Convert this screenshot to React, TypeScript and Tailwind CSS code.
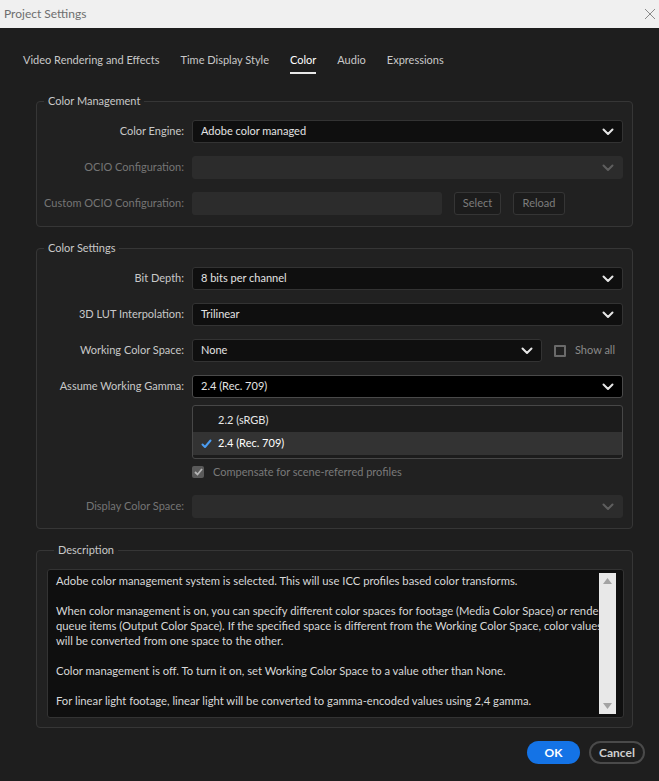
import React from "react";

function Chevron({ dim = false }: { dim?: boolean }) {
  return (
    <svg width="12" height="8" viewBox="0 0 12 8" className="shrink-0">
      <path
        d="M1.5 1.5 L6 6 L10.5 1.5"
        fill="none"
        stroke={dim ? "#5e5e5e" : "#e6e6e6"}
        strokeWidth="2"
        strokeLinecap="round"
        strokeLinejoin="round"
      />
    </svg>
  );
}

type SelectProps = {
  value?: string;
  disabled?: boolean;
  focused?: boolean;
  className?: string;
};

function Select({ value, disabled, focused, className = "" }: SelectProps) {
  const tone = disabled
    ? "border-[#2c2c2c] bg-[#2c2c2c]"
    : focused
      ? "border-[#4a4a4a] bg-black"
      : "border-[#333333] bg-[#0f0f0f]";
  return (
    <div
      className={`flex h-[23px] items-center justify-between rounded-[3px] border pl-[8px] pr-[8px] text-[11px] text-[#e3e3e3] ${tone} ${className}`}
    >
      <span>{value}</span>
      <Chevron dim={disabled} />
    </div>
  );
}

function Row({ label, disabled, children, className = "" }: { label: string; disabled?: boolean; children: React.ReactNode; className?: string }) {
  return (
    <div className={`grid grid-cols-[147px_1fr] items-center gap-x-[8px] ${className}`}>
      <span className={`whitespace-nowrap text-right text-[11px] ${disabled ? "text-[#757575]" : "text-[#c8c8c8]"}`}>{label}</span>
      {children}
    </div>
  );
}

function Group({ title, children, className = "" }: { title: string; children: React.ReactNode; className?: string }) {
  return (
    <fieldset className={`rounded-[4px] border border-[#363636] bg-[#212121] pr-[9px] pt-[11px] ${className}`}>
      <legend className="ml-[7px] px-[4px] text-[11px] leading-[16px] text-[#c8c8c8]">{title}</legend>
      {children}
    </fieldset>
  );
}

function SmallButton({ label }: { label: string }) {
  return (
    <div className="flex h-[23px] items-center justify-center rounded-[3px] border border-[#353535] bg-[#1c1c1c] px-[8px] text-[11px] text-[#7c7c7c]">
      {label}
    </div>
  );
}

export default function App() {
  const tabs = ["Video Rendering and Effects", "Time Display Style", "Color", "Audio", "Expressions"];

  return (
    <div className="relative h-[781px] w-[659px] overflow-hidden bg-[#1e1e1e] font-['Lato',sans-serif]">
      {/* title bar */}
      <div className="flex h-[28px] items-center justify-between bg-[#f0f0f0] pl-[4px] pr-[3px]">
        <span className="text-[12px] text-[#6e6e6e]">Project Settings</span>
        <svg width="12" height="12" viewBox="0 0 12 12">
          <path d="M1 1 L11 11 M11 1 L1 11" stroke="#8a8a8a" strokeWidth="1" />
        </svg>
      </div>

      {/* tabs */}
      <div className="mt-[24px] flex gap-[21px] pl-[23px]">
        {tabs.map((t) => (
          <div key={t} className="flex flex-col items-center">
            <span className={`text-[11px] leading-[16px] ${t === "Color" ? "text-white" : "text-[#c8c8c8]"}`}>{t}</span>
            <span className={`mt-[4px] h-[2px] w-full ${t === "Color" ? "bg-[#e8e8e8]" : "bg-transparent"}`} />
          </div>
        ))}
      </div>

      <div className="pl-[36px] pr-[26px]">
        <Group title="Color Management" className="mt-[19px] pb-[11px]">
          <div className="flex flex-col gap-[13px]">
            <Row label="Color Engine:">
              <Select value="Adobe color managed" />
            </Row>
            <Row label="OCIO Configuration:" disabled>
              <Select disabled />
            </Row>
            <Row label="Custom OCIO Configuration:" disabled>
              <div className="flex items-center">
                <div className="h-[23px] w-[250px] rounded-[3px] bg-[#2c2c2c]" />
                <div className="ml-[12px] w-[47px]">
                  <SmallButton label="Select" />
                </div>
                <div className="ml-[12px] w-[52px]">
                  <SmallButton label="Reload" />
                </div>
              </div>
            </Row>
          </div>
        </Group>

        <Group title="Color Settings" className="mt-[13px] pb-[10px]">
          <div className="flex flex-col gap-[13px]">
            <Row label="Bit Depth:">
              <Select value="8 bits per channel" />
            </Row>
            <Row label="3D LUT Interpolation:">
              <Select value="Trilinear" />
            </Row>
            <Row label="Working Color Space:">
              <div className="flex items-center">
                <Select value="None" className="w-[350px]" />
                <span className="ml-[12px] h-[12px] w-[12px] rounded-[1px] border-2 border-[#6a6a6a]" />
                <span className="ml-[9px] text-[11px] text-[#8a8a8a]">Show all</span>
              </div>
            </Row>
            <Row label="Assume Working Gamma:">
              <div className="relative">
                <Select value="2.4 (Rec. 709)" focused />
                <div className="absolute left-0 right-0 top-[30px] z-10 rounded-[3px] border border-[#474747] bg-[#1c1c1c] py-[3px]">
                  <div className="flex h-[23px] items-center pl-[25px] text-[11px] text-[#e6e6e6]">2.2 (sRGB)</div>
                  <div className="flex h-[23px] items-center bg-[#333333] pl-[8px] text-[11px] text-white">
                    <svg width="11" height="10" viewBox="0 0 11 10" className="mr-[6px]">
                      <path d="M1.5 5.5 L4 8 L9.5 1.5" fill="none" stroke="#4b9cf0" strokeWidth="2" strokeLinecap="round" strokeLinejoin="round" />
                    </svg>
                    2.4 (Rec. 709)
                  </div>
                </div>
              </div>
            </Row>
          </div>
          <Row label="" className="mt-[66px] h-[16px]">
            <div className="flex items-center">
              <span className="flex h-[12px] w-[12px] items-center justify-center rounded-[2px] bg-[#5a5a5a]">
                <svg width="9" height="8" viewBox="0 0 9 8">
                  <path d="M1 4 L3.5 6.5 L8 1" fill="none" stroke="#b5b5b5" strokeWidth="1.8" />
                </svg>
              </span>
              <span className="ml-[9px] text-[11px] text-[#7a7a7a]">Compensate for scene-referred profiles</span>
            </div>
          </Row>
          <Row label="Display Color Space:" disabled className="mt-[15px]">
            <Select disabled />
          </Row>
        </Group>

        <fieldset className="mt-[13px] rounded-[4px] border border-[#363636] bg-[#212121] pl-[10px] pr-[8px] pb-[9px] pt-[11px]">
          <legend className="ml-[7px] px-[4px] text-[11px] leading-[16px] text-[#c8c8c8]">Description</legend>
          <div className="relative h-[149px] overflow-hidden rounded-[3px] border border-[#333333] bg-[#0f0f0f]">
            <div className="pl-[8px] pr-[17px] pt-[3px] text-[11.25px] leading-[15px] text-[#d8d8d8]">
              <p>Adobe color management system is selected. This will use ICC profiles based color transforms.</p>
              <p className="mt-[15px]">
                When color management is on, you can specify different color spaces for footage (Media Color Space) or render queue items (Output Color Space). If the specified space is different from the Working Color Space, color values will be converted from one space to the other.
              </p>
              <p className="mt-[15px]">Color management is off. To turn it on, set Working Color Space to a value other than None.</p>
              <p className="mt-[15px]">For linear light footage, linear light will be converted to gamma-encoded values using 2,4 gamma.</p>
            </div>
            <div className="absolute bottom-[3px] right-[7px] top-[3px] flex w-[17px] flex-col items-center justify-between bg-[#e8e8e8] py-[5px]">
              <svg width="9" height="6" viewBox="0 0 9 6">
                <path d="M0 6 L4.5 0 L9 6 Z" fill="#a3a3a3" />
              </svg>
              <svg width="9" height="6" viewBox="0 0 9 6">
                <path d="M0 0 L4.5 6 L9 0 Z" fill="#a3a3a3" />
              </svg>
            </div>
          </div>
        </fieldset>
      </div>

      <div className="mt-[13px] flex justify-end gap-[9px] pr-[14px]">
        <button className="flex h-[23px] w-[53px] items-center justify-center rounded-full bg-[#1473e6] text-[12px] font-bold text-white">
          OK
        </button>
        <button className="flex h-[23px] w-[56px] items-center justify-center rounded-full border-2 border-[#4a4a4a] text-[12px] font-bold text-[#cfcfcf]">
          Cancel
        </button>
      </div>
    </div>
  );
}
